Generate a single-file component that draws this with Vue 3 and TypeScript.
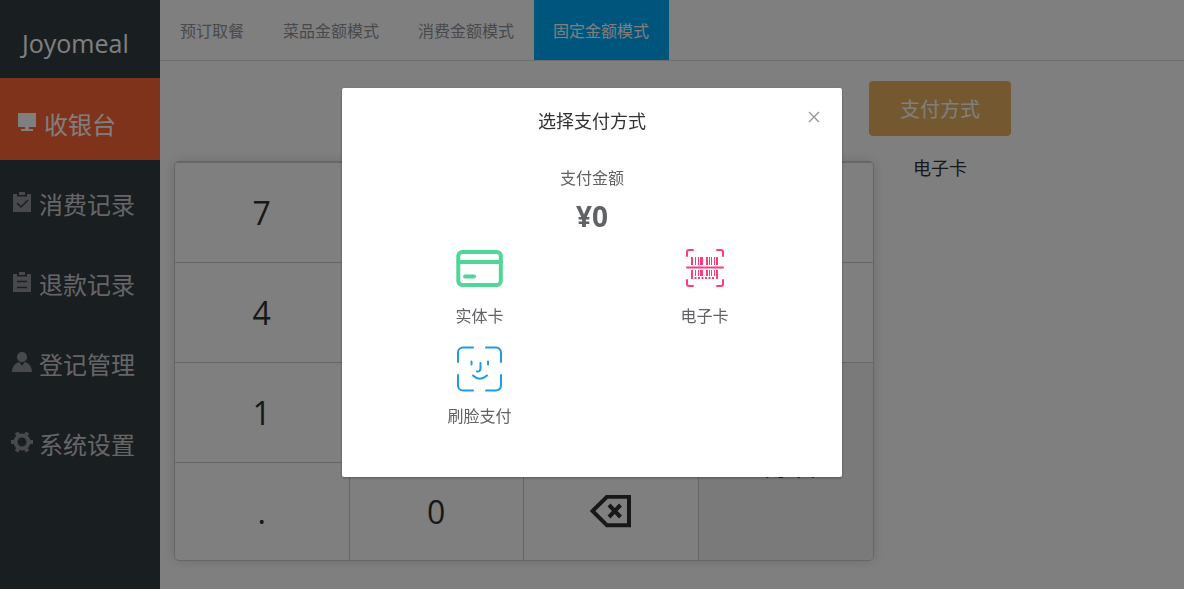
<script setup lang="ts">
import { ref } from 'vue'

type MenuIcon = 'monitor' | 'check' | 'list' | 'user' | 'gear'

const menu: { label: string; icon: MenuIcon }[] = [
  { label: '收银台', icon: 'monitor' },
  { label: '消费记录', icon: 'check' },
  { label: '退款记录', icon: 'list' },
  { label: '登记管理', icon: 'user' },
  { label: '系统设置', icon: 'gear' },
]
const tabs = ['预订取餐', '菜品金额模式', '消费金额模式', '固定金额模式']
const keys = ['7', '8', '9', 'C', '4', '5', '6', '+', '1', '2', '3', '确认', '.', '0', 'back']
const methods = [
  { id: 'card', label: '实体卡' },
  { id: 'code', label: '电子卡' },
  { id: 'face', label: '刷脸支付' },
]

const activeMenu = ref('收银台')
const activeTab = ref('固定金额模式')
const open = ref(true)
const method = ref('电子卡')

function choose(label: string) {
  method.value = label
  open.value = false
}
</script>

<template>
  <div class="app">
    <aside class="sidebar">
      <div class="logo">Joyomeal</div>
      <nav>
        <a
          v-for="item in menu"
          :key="item.label"
          href="#"
          class="menu-item"
          :class="{ active: item.label === activeMenu }"
          @click.prevent="activeMenu = item.label"
        >
          <svg class="menu-icon" viewBox="0 0 24 24" aria-hidden="true">
            <path v-if="item.icon === 'monitor'" d="M3 3h18v14H3zM10 17h4v2h4v2H6v-2h4z" />
            <template v-else-if="item.icon === 'check'">
              <path d="M3 4h4v2.500h10V4h4v18H3zM9 2h6v3H9z" />
              <path class="cut" d="M7 13l4 4 7-7" />
            </template>
            <template v-else-if="item.icon === 'list'">
              <path d="M3 4h4v2.500h10V4h4v18H3zM9 2h6v3H9z" />
              <path class="cut" d="M7 11.500h10M7 17.500h10" />
            </template>
            <path
              v-else-if="item.icon === 'user'"
              d="M12 2a5 5 0 0 1 3 9c-2 1.500-4 1.500-6 0a5 5 0 0 1 3-9zM2 22c0-5 3-9 7.500-10L12 16l2.500-4C19 13 22 17 22 22z"
            />
            <g v-else class="gear">
              <circle cx="12" cy="12" r="6.500" />
              <path d="M1 12h3M20 12h3M6.500 2.500l1.500 2.600M16 18.900l1.500 2.600M17.500 2.500L16 5.100M8 18.900l-1.500 2.600" />
            </g>
          </svg>
          <span>{{ item.label }}</span>
        </a>
      </nav>
    </aside>

    <main class="main">
      <header class="tabs">
        <button
          v-for="tab in tabs"
          :key="tab"
          type="button"
          class="tab"
          :class="{ active: tab === activeTab }"
          @click="activeTab = tab"
        >
          {{ tab }}
        </button>
      </header>
      <div class="content">
        <section class="keypad">
          <button
            v-for="key in keys"
            :key="key"
            type="button"
            class="key"
            :class="{ confirm: key === '确认' }"
            :aria-label="key === 'back' ? '退格' : undefined"
          >
            <svg v-if="key === 'back'" class="back-icon" viewBox="0 0 42 34" aria-hidden="true">
              <path d="M17 1.800h22v28.500H17L2.500 16z" />
              <path d="M19 10l11.500 12M30.500 10l-11.500 12" />
            </svg>
            <template v-else>{{ key }}</template>
          </button>
        </section>
        <section class="payment">
          <button type="button" class="pay-button" @click="open = true">支付方式</button>
          <span class="pay-current">{{ method }}</span>
        </section>
      </div>
    </main>

    <div v-if="open" class="overlay">
      <div class="dialog" role="dialog" aria-modal="true" aria-labelledby="dialog-title">
        <h2 id="dialog-title" class="title">选择支付方式</h2>
        <button type="button" class="close" aria-label="关闭" @click="open = false">
          <svg viewBox="0 0 12 12" aria-hidden="true"><path d="M1 1l10 10M11 1L1 11" /></svg>
        </button>
        <p class="caption">支付金额</p>
        <p class="amount">¥0</p>
        <div class="methods">
          <button
            v-for="m in methods"
            :key="m.id"
            type="button"
            class="method"
            @click="choose(m.label)"
          >
            <svg v-if="m.id === 'card'" class="method-icon green" viewBox="0 0 51 50" aria-hidden="true">
              <rect x="4.300" y="8" width="42.500" height="33" rx="4" />
              <path d="M4.500 18h42M11 32.500h9" />
            </svg>
            <svg v-else-if="m.id === 'code'" class="method-icon pink" viewBox="0 0 51 50" aria-hidden="true">
              <path d="M8 12V8a2 2 0 0 1 2-2h4M38 6h4a2 2 0 0 1 2 2v4M44 36v4a2 2 0 0 1-2 2h-4M14 42h-4a2 2 0 0 1-2-2v-4M8 23.500h36" />
              <path class="bars wide" d="M13 13v8M23 13v8M28 13v8M38 13v8M13 26v9M23 26v6M28 26v6M38 26v9" />
              <path class="bars" d="M16.500 13v8M19.500 13v8M21.500 13v8M30.500 13v8M32.500 13v8M35.500 13v8M16.500 26v6M19.500 26v6M21.500 26v6M30.500 26v6M32.500 26v6M35.500 26v6" />
              <path class="bars wide" stroke-dasharray="2 1.500" d="M15.500 34h21" />
            </svg>
            <svg v-else class="method-icon blue" viewBox="0 0 51 50" aria-hidden="true">
              <path d="M4 18V8.500a5 5 0 0 1 5-5h10M32 3.500h10a5 5 0 0 1 5 5V18M47 31v10.500a5 5 0 0 1-5 5H32M19 46.500H9a5 5 0 0 1-5-5V31" />
              <path d="M17.500 17.500v3M34 17.500v3M26.500 19v5q0 4-3.500 3.500M19 31.500q6.500 6.500 14 0" />
            </svg>
            <span>{{ m.label }}</span>
          </button>
        </div>
      </div>
    </div>
  </div>
</template>

<style>
body {
  margin: 0;
}
</style>

<style scoped>
.app {
  display: flex;
  min-height: 100vh;
  background: #fff;
  color: #303133;
  font-family: 'Open Sans', 'Noto Sans CJK SC', sans-serif;
  font-size: 16px;
}
button {
  margin: 0;
  padding: 0;
  border: 0;
  background: none;
  color: inherit;
  font: inherit;
  cursor: pointer;
}
.sidebar {
  flex: 0 0 160px;
  background: #333c40;
}
.logo {
  box-sizing: border-box;
  height: 78px;
  padding: 25px 0 0 22px;
  color: #fff;
  font-size: 25px;
  line-height: 36px;
}
.menu-item {
  box-sizing: border-box;
  display: flex;
  align-items: flex-start;
  gap: 5px;
  height: 80px;
  padding: 27px 0 0 10px;
  color: #ccc;
  font-size: 24px;
  line-height: 36px;
  text-decoration: none;
}
.menu-item.active {
  height: 82px;
  padding: 29px 0 0 15px;
  background: #ff6636;
  color: #fff;
}
.menu-icon {
  width: 24px;
  height: 24px;
  margin-top: 3px;
  fill: #909399;
}
.active .menu-icon {
  fill: #fff;
}
.cut {
  fill: none;
  stroke: #333c40;
  stroke-width: 1.500;
}
.gear {
  fill: none;
  stroke: #909399;
  stroke-width: 4;
}
.main {
  flex: 1;
  min-width: 0;
}
.tabs {
  display: flex;
  height: 60px;
  padding-left: 1px;
  border-bottom: 1px solid #dcdcdc;
}
.tab {
  padding: 2px 20px 0 19px;
  color: #909399;
  line-height: 58px;
}
.tab.active {
  background: #00aaf8;
  color: #fff;
}
.content {
  display: flex;
  align-items: flex-start;
  padding: 20px 14px;
}
.keypad {
  flex: 0 0 698px;
  display: grid;
  grid-template-columns: repeat(4, 1fr);
  grid-template-rows: repeat(3, 100px) 98px;
  margin-top: 80px;
  overflow: hidden;
  border: 1px solid #ccc;
  border-radius: 5px;
  box-shadow: 0 0 12px rgba(0, 0, 0, 0.15);
}
.key {
  border-top: 1px solid #ccc;
  border-right: 1px solid #ccc;
  color: #303030;
  font-size: 32px;
}
.key:nth-child(4n) {
  border-right: 0;
}
.confirm {
  grid-row: 3 / 5;
  grid-column: 4;
  background: #f4f4f4;
  font-size: 30px;
}
.back-icon {
  display: block;
  width: 42px;
  height: 34px;
  margin: 0 auto;
  fill: none;
  stroke: #303030;
  stroke-width: 4;
}
.payment {
  flex: 0 0 auto;
  display: flex;
  flex-direction: column;
  align-items: center;
  margin-left: -5px;
}
.pay-button {
  width: 142px;
  height: 55px;
  border-radius: 4px;
  background: #e8b260;
  color: #fff;
  font-size: 20px;
}
.pay-current {
  margin-top: 19px;
  font-size: 18px;
  line-height: 26px;
}
.overlay {
  position: fixed;
  inset: 0;
  background: rgba(0, 0, 0, 0.5);
}
.dialog {
  position: relative;
  box-sizing: border-box;
  width: 500px;
  max-width: 100%;
  margin: 15vh auto 0;
  padding: 20px 25px 33px;
  border-radius: 2px;
  background: #fff;
  box-shadow: 0 1px 3px rgba(0, 0, 0, 0.3);
  color: #606266;
  text-align: center;
}
.title {
  margin: 0;
  color: #303133;
  font-size: 18px;
  font-weight: 400;
  line-height: 26px;
}
.close {
  position: absolute;
  top: 21px;
  right: 20px;
  display: flex;
  padding: 2px;
}
.close svg {
  width: 12px;
  height: 12px;
  fill: none;
  stroke: #909399;
  stroke-width: 1.300;
}
.caption {
  margin: 32px 0 0;
  line-height: 24px;
}
.amount {
  margin: 8px 0 0;
  font-size: 28px;
  font-weight: 700;
  line-height: 36px;
}
.methods {
  display: grid;
  grid-template-columns: 1fr 1fr;
  margin-top: 10px;
}
.method {
  display: flex;
  flex-direction: column;
  align-items: center;
  gap: 10px;
  height: 100px;
  line-height: 24px;
}
.method-icon {
  width: 51px;
  height: 50px;
  fill: none;
  stroke-width: 2;
  stroke-linecap: round;
}
.green {
  stroke: #50d697;
  stroke-width: 4;
}
.pink {
  stroke: #ff3c78;
}
.blue {
  stroke: #1f9be0;
}
.bars {
  stroke-width: 1;
  stroke-linecap: butt;
}
.bars.wide {
  stroke-width: 2;
}
</style>
